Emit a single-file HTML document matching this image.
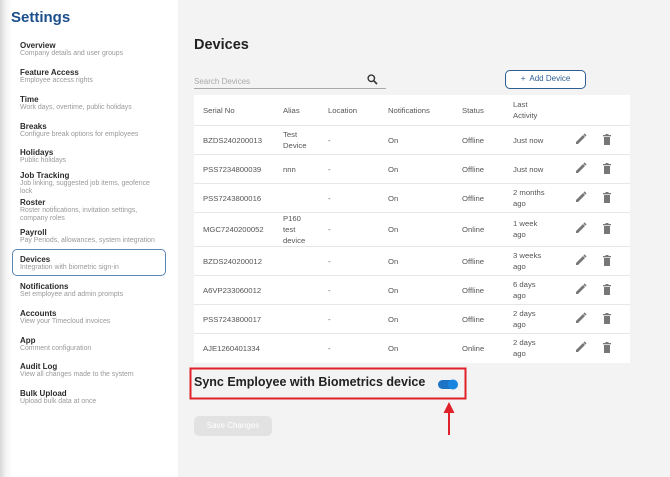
<!DOCTYPE html>
<html><head><meta charset="utf-8"><style>
*{margin:0;padding:0;box-sizing:border-box}
body{width:670px;height:477px;overflow:hidden;background:#f3f3f3;font-family:"Liberation Sans",sans-serif;position:relative;color:#333}
.side{position:absolute;left:0;top:0;width:178px;height:477px;background:linear-gradient(to right,#d8d8d8 0,#f4f4f4 6px,#fff 12px,#fff 100%)}
.h1{position:absolute;left:11px;top:9px;font-size:15px;font-weight:bold;color:#1c4f8c}
.it{position:absolute;left:20px;width:135px}
.it b{display:block;font-size:8px;color:#2a2a2a;line-height:9px}
.it span{display:block;font-size:6.9px;color:#999;line-height:8px}
.sel{position:absolute;left:12px;top:249px;width:154px;height:27px;border:1px solid #5b86b3;border-radius:5px;background:#fff}
.t{position:absolute;font-size:7.7px;color:#555;line-height:11px}
.hdr{position:absolute;left:194px;top:95px;width:436px;height:268px;background:#fff}
.line{position:absolute;left:194px;width:436px;height:1px;background:#e6e6e6}
</style></head><body>
<div class="side"></div>
<div class="h1">Settings</div>
<div class="sel"></div>
<div class="it" style="top:41px"><b>Overview</b><span>Company details and user groups</span></div>
<div class="it" style="top:68px"><b>Feature Access</b><span>Employee access rights</span></div>
<div class="it" style="top:95px"><b>Time</b><span>Work days, overtime, public holidays</span></div>
<div class="it" style="top:122px"><b>Breaks</b><span>Configure break options for employees</span></div>
<div class="it" style="top:148px"><b>Holidays</b><span>Public holidays</span></div>
<div class="it" style="top:171px"><b>Job Tracking</b><span>Job linking, suggested job items, geofence lock</span></div>
<div class="it" style="top:198px"><b>Roster</b><span>Roster notifications, invitation settings, company roles</span></div>
<div class="it" style="top:228px;width:150px"><b>Payroll</b><span>Pay Periods, allowances, system integration</span></div>
<div class="it" style="top:255px"><b>Devices</b><span>Integration with biometric sign-in</span></div>
<div class="it" style="top:282px"><b>Notifications</b><span>Set employee and admin prompts</span></div>
<div class="it" style="top:309px"><b>Accounts</b><span>View your Timecloud invoices</span></div>
<div class="it" style="top:336px"><b>App</b><span>Comment configuration</span></div>
<div class="it" style="top:362px;width:150px"><b>Audit Log</b><span>View all changes made to the system</span></div>
<div class="it" style="top:389px"><b>Bulk Upload</b><span>Upload bulk data at once</span></div>

<div style="position:absolute;left:194px;top:37px;font-size:14.5px;font-weight:bold;color:#222">Devices</div>
<div style="position:absolute;left:194px;top:77px;font-size:8px;color:#aaa">Search Devices</div>
<div style="position:absolute;left:194px;top:88px;width:192px;height:1px;background:#aaa"></div>
<svg style="position:absolute;left:367px;top:74px" width="11" height="11" viewBox="0 0 11 11"><circle cx="4.3" cy="4.3" r="3.2" fill="none" stroke="#333" stroke-width="1.4"/><path d="M6.6 6.6L10 10" stroke="#333" stroke-width="1.6"/></svg>
<div style="position:absolute;left:505px;top:70px;width:81px;height:19px;border:1.5px solid #2e5f93;border-radius:5px;background:#fff;font-size:8px;color:#2e5f93;text-align:center;line-height:16px">+&nbsp; Add Device</div>

<div class="hdr"></div>
<div class="t" style="left:203px;top:105px">Serial No</div>
<div class="t" style="left:283px;top:105px">Alias</div>
<div class="t" style="left:328px;top:105px">Location</div>
<div class="t" style="left:388px;top:105px">Notifications</div>
<div class="t" style="left:462px;top:105px">Status</div>
<div class="t" style="left:513px;top:99px">Last<br>Activity</div>
<div class="line" style="top:125px"></div>
<div class="line" style="top:154px"></div>
<div class="line" style="top:183px"></div>
<div class="line" style="top:212px"></div>
<div class="line" style="top:246px"></div>
<div class="line" style="top:275px"></div>
<div class="line" style="top:304px"></div>
<div class="line" style="top:333px"></div>

<div class="t" style="left:203px;top:135px">BZDS240200013</div><div class="t" style="left:283px;top:129px">Test<br>Device</div><div class="t" style="left:328px;top:135px">-</div><div class="t" style="left:388px;top:135px">On</div><div class="t" style="left:462px;top:135px">Offline</div><div class="t" style="left:513px;top:135px">Just now</div>
<div class="t" style="left:203px;top:164px">PSS7234800039</div><div class="t" style="left:283px;top:164px">nnn</div><div class="t" style="left:328px;top:164px">-</div><div class="t" style="left:388px;top:164px">On</div><div class="t" style="left:462px;top:164px">Offline</div><div class="t" style="left:513px;top:164px">Just now</div>
<div class="t" style="left:203px;top:193px">PSS7243800016</div><div class="t" style="left:328px;top:193px">-</div><div class="t" style="left:388px;top:193px">On</div><div class="t" style="left:462px;top:193px">Offline</div><div class="t" style="left:513px;top:187px">2 months<br>ago</div>
<div class="t" style="left:203px;top:224px">MGC7240200052</div><div class="t" style="left:283px;top:213px">P160<br>test<br>device</div><div class="t" style="left:328px;top:224px">-</div><div class="t" style="left:388px;top:224px">On</div><div class="t" style="left:462px;top:224px">Online</div><div class="t" style="left:513px;top:218px">1 week<br>ago</div>
<div class="t" style="left:203px;top:256px">BZDS240200012</div><div class="t" style="left:328px;top:256px">-</div><div class="t" style="left:388px;top:256px">On</div><div class="t" style="left:462px;top:256px">Offline</div><div class="t" style="left:513px;top:250px">3 weeks<br>ago</div>
<div class="t" style="left:203px;top:285px">A6VP233060012</div><div class="t" style="left:328px;top:285px">-</div><div class="t" style="left:388px;top:285px">On</div><div class="t" style="left:462px;top:285px">Offline</div><div class="t" style="left:513px;top:279px">6 days<br>ago</div>
<div class="t" style="left:203px;top:314px">PSS7243800017</div><div class="t" style="left:328px;top:314px">-</div><div class="t" style="left:388px;top:314px">On</div><div class="t" style="left:462px;top:314px">Offline</div><div class="t" style="left:513px;top:308px">2 days<br>ago</div>
<div class="t" style="left:203px;top:343px">AJE1260401334</div><div class="t" style="left:328px;top:343px">-</div><div class="t" style="left:388px;top:343px">On</div><div class="t" style="left:462px;top:343px">Online</div><div class="t" style="left:513px;top:337px">2 days<br>ago</div>

<svg style="position:absolute;left:0;top:0" width="670" height="477">
<defs>
<g id="ic">
<path d="M-5 4L-5 2L2 -5L4 -3L-3 4Z" fill="#777"/><path d="M3 -6L5 -4" stroke="#777" stroke-width="1.6"/>
<rect x="23" y="-3" width="6" height="8" fill="#777"/><rect x="22" y="-5" width="8" height="1.3" fill="#777"/><rect x="24.5" y="-6" width="3" height="1" fill="#777"/>
</g>
</defs>
<use href="#ic" x="581" y="140"/>
<use href="#ic" x="581" y="169"/>
<use href="#ic" x="581" y="198"/>
<use href="#ic" x="581" y="229"/>
<use href="#ic" x="581" y="261"/>
<use href="#ic" x="581" y="290"/>
<use href="#ic" x="581" y="319"/>
<use href="#ic" x="581" y="348"/>
<rect x="190.5" y="368.5" width="275" height="30" fill="none" stroke="#e0202a" stroke-width="2"/>
<rect x="438" y="380" width="18" height="9" rx="4.5" fill="#1d74c4"/>
<circle cx="453" cy="384.5" r="5" fill="#1a86e0"/>
<path d="M449 402L443.5 413H454.5Z" fill="#e0202a"/>
<rect x="448" y="412" width="2" height="23" fill="#e0202a"/>
</svg>
<div style="position:absolute;left:194px;top:375px;font-size:12.5px;font-weight:bold;color:#222">Sync Employee with Biometrics device</div>
<div style="position:absolute;left:194px;top:416px;width:78px;height:20px;border-radius:5px;background:#e2e2e2;color:#fff;font-size:8px;text-align:center;line-height:20px">Save Changes</div>
</body></html>
